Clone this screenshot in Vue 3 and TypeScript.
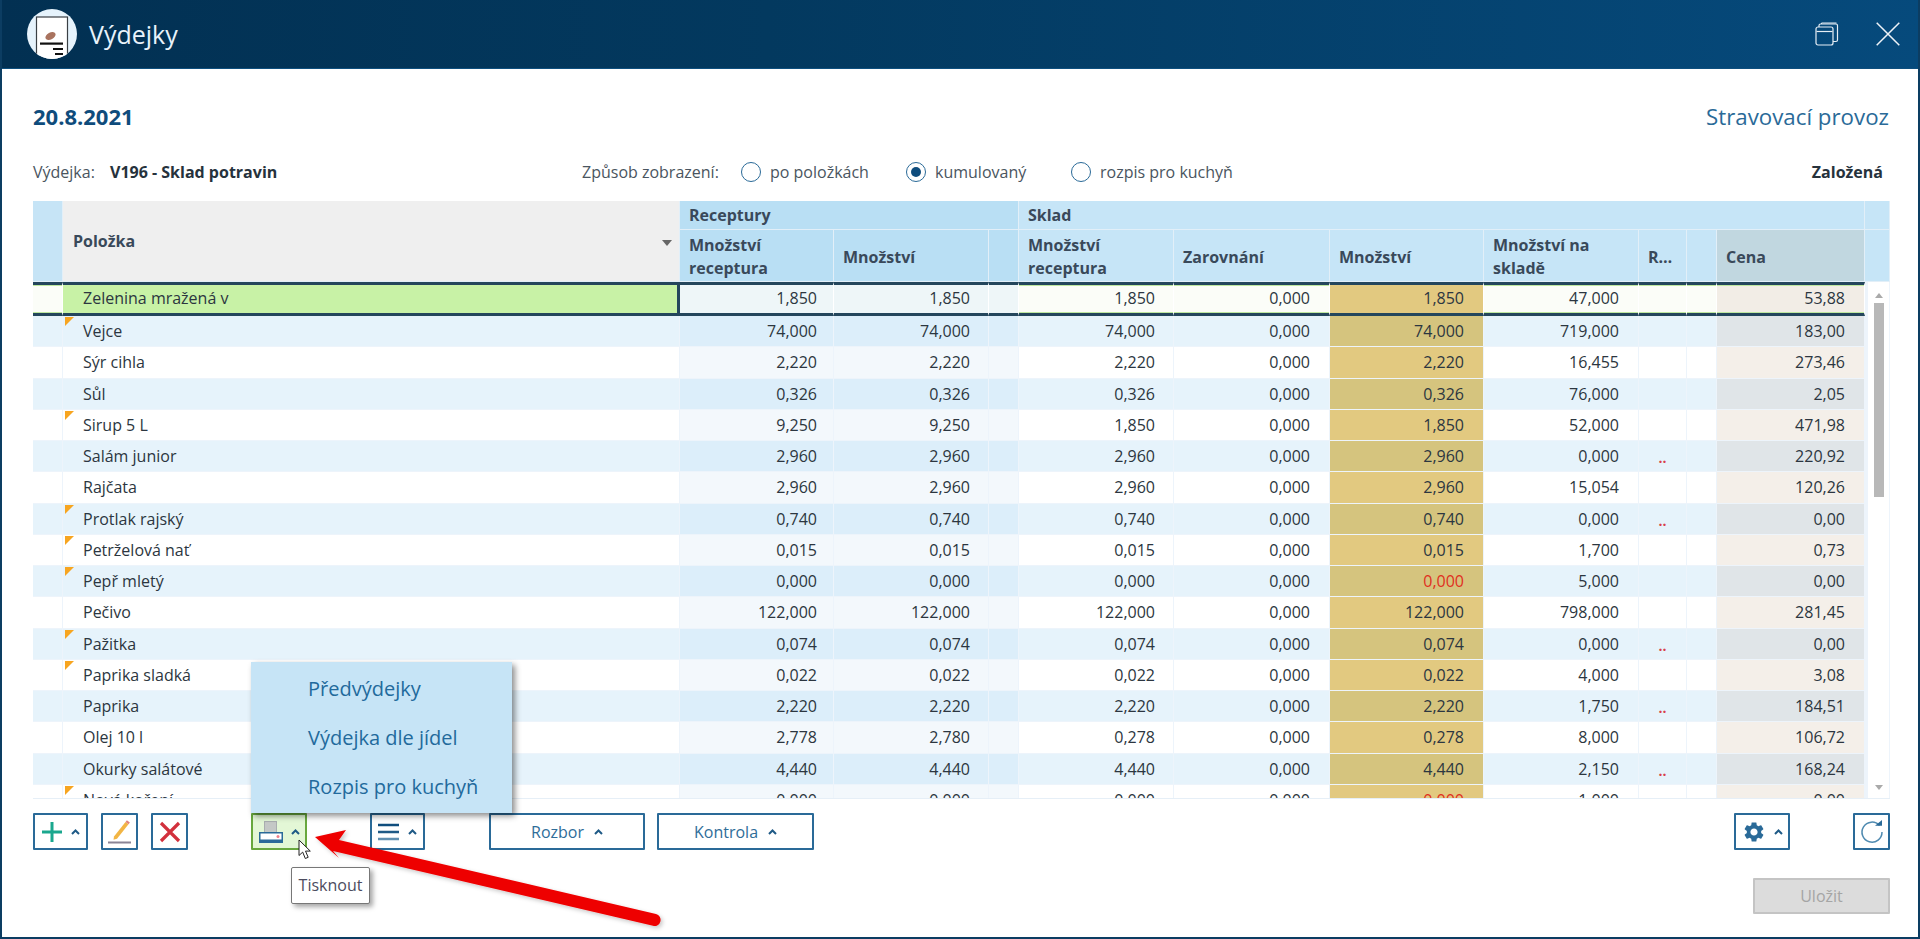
<script setup lang="ts">
interface Row {
  name: string
  flag?: boolean
  a: string
  b: string
  c: string
  z: string
  m: string
  red?: boolean
  s: string
  r?: boolean
  p: string
}
const rows: Row[] = [
  { name: 'Vejce', flag: true, a: '74,000', b: '74,000', c: '74,000', z: '0,000', m: '74,000', s: '719,000', p: '183,00' },
  { name: 'Sýr cihla', a: '2,220', b: '2,220', c: '2,220', z: '0,000', m: '2,220', s: '16,455', p: '273,46' },
  { name: 'Sůl', a: '0,326', b: '0,326', c: '0,326', z: '0,000', m: '0,326', s: '76,000', p: '2,05' },
  { name: 'Sirup 5 L', flag: true, a: '9,250', b: '9,250', c: '1,850', z: '0,000', m: '1,850', s: '52,000', p: '471,98' },
  { name: 'Salám junior', a: '2,960', b: '2,960', c: '2,960', z: '0,000', m: '2,960', s: '0,000', r: true, p: '220,92' },
  { name: 'Rajčata', a: '2,960', b: '2,960', c: '2,960', z: '0,000', m: '2,960', s: '15,054', p: '120,26' },
  { name: 'Protlak rajský', flag: true, a: '0,740', b: '0,740', c: '0,740', z: '0,000', m: '0,740', s: '0,000', r: true, p: '0,00' },
  { name: 'Petrželová nať', flag: true, a: '0,015', b: '0,015', c: '0,015', z: '0,000', m: '0,015', s: '1,700', p: '0,73' },
  { name: 'Pepř mletý', flag: true, a: '0,000', b: '0,000', c: '0,000', z: '0,000', m: '0,000', red: true, s: '5,000', p: '0,00' },
  { name: 'Pečivo', a: '122,000', b: '122,000', c: '122,000', z: '0,000', m: '122,000', s: '798,000', p: '281,45' },
  { name: 'Pažitka', flag: true, a: '0,074', b: '0,074', c: '0,074', z: '0,000', m: '0,074', s: '0,000', r: true, p: '0,00' },
  { name: 'Paprika sladká', flag: true, a: '0,022', b: '0,022', c: '0,022', z: '0,000', m: '0,022', s: '4,000', p: '3,08' },
  { name: 'Paprika', a: '2,220', b: '2,220', c: '2,220', z: '0,000', m: '2,220', s: '1,750', r: true, p: '184,51' },
  { name: 'Olej 10 l', a: '2,778', b: '2,780', c: '0,278', z: '0,000', m: '0,278', s: '8,000', p: '106,72' },
  { name: 'Okurky salátové', a: '4,440', b: '4,440', c: '4,440', z: '0,000', m: '4,440', s: '2,150', r: true, p: '168,24' },
  { name: 'Nová koření', flag: true, a: '0,000', b: '0,000', c: '0,000', z: '0,000', m: '0,000', red: true, s: '1,000', p: '0,00' },
]
const menu: string[] = ['Předvýdejky', 'Výdejka dle jídel', 'Rozpis pro kuchyň']
</script>

<template>
  <div class="window">
    <header class="titlebar">
      <svg class="logo" width="50" height="50" viewBox="0 0 50 50">
        <defs>
          <clipPath id="lc"><circle cx="25" cy="25" r="25" /></clipPath>
        </defs>
        <circle cx="25" cy="25" r="25" fill="#e6f3fc" />
        <g clip-path="url(#lc)">
          <rect x="9.5" y="8" width="31" height="46" fill="#fff" stroke="#3a3f44" stroke-width="1.2" />
          <ellipse cx="23.5" cy="27" rx="5.5" ry="3.4" transform="rotate(-28 23.5 27)" fill="#a9735f" />
          <rect x="13" y="33.5" width="23" height="2.2" fill="#111" />
          <rect x="26" y="39" width="10" height="2" fill="#111" />
          <rect x="28" y="44" width="8" height="2" fill="#111" />
        </g>
      </svg>
      <h1 class="title">Výdejky</h1>
      <svg class="restore" width="24" height="24" viewBox="0 0 24 24" fill="none" stroke="#e6eef5" stroke-width="1.2">
        <rect x="1" y="5" width="17" height="18" rx="2" />
        <path d="M1.5 9.5h16" />
        <path d="M4 5V3.5q0-1.5 1.5-1.5H21q1.500 0 1.500 1.500V18q0 1.500-1.500 1.500h-3" />
        <path d="M6.500 2V1h15" stroke-width="1" />
      </svg>
      <svg class="close" width="24" height="24" viewBox="0 0 24 24" fill="none" stroke="#eef3f8" stroke-width="1.500">
        <path d="M0.700 0.700 23.300 23.300M23.300 0.700 0.700 23.300" />
      </svg>
    </header>

    <main class="content">
      <div class="top-row">
        <div class="date">20.8.2021</div>
        <div class="org">Stravovací provoz</div>
      </div>

      <div class="info-row">
        <div class="doc">
          <span class="doc-label">Výdejka:</span>
          <strong class="doc-value">V196 - Sklad potravin</strong>
        </div>
        <span class="mode-label">Způsob zobrazení:</span>
        <label class="radio"><i class="dot"></i>po položkách</label>
        <label class="radio"><i class="dot on"></i>kumulovaný</label>
        <label class="radio"><i class="dot"></i>rozpis pro kuchyň</label>
        <strong class="state">Založená</strong>
      </div>

      <section class="table">
        <div class="thead">
          <div class="th gutter-h"></div>
          <div class="th item-h">Položka<span class="sort"></span></div>
          <div class="th group rec-g">Receptury</div>
          <div class="th group sk-g">Sklad</div>
          <div class="th end-g"></div>
          <div class="th sub rec-h">Množství receptura</div>
          <div class="th sub rec-h">Množství</div>
          <div class="th sub rec-h"></div>
          <div class="th sub sk-h">Množství receptura</div>
          <div class="th sub sk-h">Zarovnání</div>
          <div class="th sub sk-h">Množství</div>
          <div class="th sub sk-h">Množství na skladě</div>
          <div class="th sub sk-h">R…</div>
          <div class="th sub sk-h"></div>
          <div class="th sub price-h">Cena</div>
          <div class="th end-h"></div>
        </div>

        <div class="tbody">
          <div class="rows">
            <div class="row sel">
              <div class="td gut"></div>
              <div class="td name">Zelenina mražená v</div>
              <div class="td rc">1,850</div>
              <div class="td rc">1,850</div>
              <div class="td rc"></div>
              <div class="td">1,850</div>
              <div class="td">0,000</div>
              <div class="td gold">1,850</div>
              <div class="td">47,000</div>
              <div class="td"></div>
              <div class="td"></div>
              <div class="td price">53,88</div>
            </div>
            <div v-for="(r, i) in rows" :key="r.name" class="row" :class="i % 2 === 0 ? 'blue' : 'white'">
              <div class="td gut"></div>
              <div class="td name" :class="{ flag: r.flag }">{{ r.name }}</div>
              <div class="td rc">{{ r.a }}</div>
              <div class="td rc">{{ r.b }}</div>
              <div class="td rc"></div>
              <div class="td">{{ r.c }}</div>
              <div class="td">{{ r.z }}</div>
              <div class="td gold" :class="{ red: r.red }">{{ r.m }}</div>
              <div class="td">{{ r.s }}</div>
              <div class="td mark">{{ r.r ? '..' : '' }}</div>
              <div class="td"></div>
              <div class="td price">{{ r.p }}</div>
            </div>
          </div>
          <div class="scroll">
            <span class="sc-up"></span>
            <span class="sc-thumb"></span>
            <span class="sc-down"></span>
          </div>
        </div>
      </section>

      <div class="toolbar">
        <button class="btn add">
          <svg width="22" height="22" viewBox="0 0 22 22"><path d="M11 1v20M1 11h20" stroke="#1aa78e" stroke-width="3" fill="none" /></svg>
          <svg class="chev" width="9" height="6" viewBox="0 0 9 6"><path d="M1 5l3.500-3.500L8 5" fill="none" stroke="#1f5a86" stroke-width="2" /></svg>
        </button>
        <button class="btn icon edit">
          <svg width="25" height="25" viewBox="0 0 25 25">
            <path d="M7 17.500 18.500 3l3 2.300L10 19.800l-3.500 1z" fill="#f2b544" />
            <path d="M18.500 3l1.400-1.700 3 2.300-1.400 1.700z" fill="#e2837a" />
            <rect x="1" y="22.500" width="23" height="2" fill="#8a8496" />
          </svg>
        </button>
        <button class="btn icon del">
          <svg width="22" height="22" viewBox="0 0 22 22"><path d="M2 2l18 18M20 2 2 20" stroke="#d2303c" stroke-width="3.200" fill="none" /></svg>
        </button>

        <div class="print-wrap">
          <div class="popup">
            <a v-for="m in menu" :key="m" class="popup-item">{{ m }}</a>
          </div>
          <button class="btn print">
            <svg width="24" height="22" viewBox="0 0 24 22">
              <rect x="5.500" y="0.500" width="12" height="11" fill="#c4c8c6" stroke="#a9aeb0" />
              <rect x="0.750" y="11.750" width="22.500" height="9.500" fill="#fff" stroke="#2a6a98" stroke-width="1.500" />
              <rect x="1" y="18.500" width="22" height="3" fill="#2a6a98" />
              <circle cx="19" cy="15.500" r="1.500" fill="#ef7f8a" />
            </svg>
            <svg class="chev" width="9" height="6" viewBox="0 0 9 6"><path d="M1 5l3.500-3.500L8 5" fill="none" stroke="#1f5a86" stroke-width="2" /></svg>
          </button>
          <svg class="cursor" width="13" height="21" viewBox="0 0 13 21">
            <path d="M1 1v15.500l3.700-3.400 2.600 6.400 2.900-1.200-2.700-6.200h4.800z" fill="#fff" stroke="#222" stroke-width="1" />
          </svg>
          <div class="tooltip">Tisknout</div>
        </div>

        <button class="btn menu">
          <svg width="22" height="18" viewBox="0 0 22 18"><path d="M0 2h21" stroke="#0f4d7d" stroke-width="2.500" /><path d="M0 9h21" stroke="#1f5a86" stroke-width="2.500" /><path d="M0 16h21" stroke="#5f8fb0" stroke-width="2.500" /></svg>
          <svg class="chev" width="9" height="6" viewBox="0 0 9 6"><path d="M1 5l3.500-3.500L8 5" fill="none" stroke="#1f5a86" stroke-width="2" /></svg>
        </button>
        <button class="btn wide rozbor">Rozbor<svg class="chev-t" width="9" height="6" viewBox="0 0 9 6"><path d="M1 5l3.500-3.500L8 5" fill="none" stroke="#1f5a86" stroke-width="2" /></svg></button>
        <button class="btn wide kontrola">Kontrola<svg class="chev-t" width="9" height="6" viewBox="0 0 9 6"><path d="M1 5l3.500-3.500L8 5" fill="none" stroke="#1f5a86" stroke-width="2" /></svg></button>

        <button class="btn gear">
          <svg width="24" height="24" viewBox="0 0 24 24"><path fill="#2a6a98" d="M19.140 12.940c.04-.3.06-.61.06-.94 0-.32-.02-.64-.07-.94l2.030-1.580c.18-.14.230-.41.120-.61l-1.920-3.320c-.12-.22-.37-.29-.59-.22l-2.390.96c-.5-.38-1.030-.7-1.620-.94l-.36-2.540c-.04-.24-.24-.41-.48-.41h-3.840c-.24 0-.43.17-.47.41l-.36 2.540c-.59.24-1.130.57-1.620.94l-2.390-.96c-.22-.08-.47 0-.59.22L2.740 8.870c-.12.21-.08.47.12.61l2.030 1.580c-.05.3-.09.63-.09.94s.02.64.07.94l-2.030 1.580c-.18.14-.23.41-.12.61l1.920 3.320c.12.22.37.29.59.22l2.390-.96c.5.38 1.030.7 1.620.94l.36 2.540c.05.24.24.41.48.41h3.840c.24 0 .44-.17.47-.41l.36-2.540c.59-.24 1.130-.56 1.620-.94l2.390.96c.22.08.47 0 .59-.22l1.920-3.320c.12-.22.07-.47-.12-.61l-2.010-1.580zM12 15.600c-1.980 0-3.600-1.620-3.600-3.600s1.620-3.600 3.600-3.600 3.600 1.620 3.600 3.600-1.620 3.600-3.600 3.600z" /></svg>
          <svg class="chev" width="9" height="6" viewBox="0 0 9 6"><path d="M1 5l3.500-3.500L8 5" fill="none" stroke="#1f5a86" stroke-width="2" /></svg>
        </button>
        <button class="btn icon refresh">
          <svg width="24" height="24" viewBox="0 0 24 24">
            <path d="M19.500 5.500A10 10 0 1 0 22 12" fill="none" stroke="#4f8ab0" stroke-width="1.500" />
            <path d="M15 5.800h7V0z" fill="#2a6a98" />
          </svg>
        </button>
      </div>

      <div class="footer">
        <button class="save" disabled>Uložit</button>
      </div>
    </main>

    <svg class="arrow" width="1920" height="939" viewBox="0 0 1920 939">
      <defs>
        <filter id="as" x="-10%" y="-30%" width="120%" height="160%">
          <feDropShadow dx="2" dy="2" stdDeviation="2" flood-color="#000" flood-opacity=".22" />
        </filter>
      </defs>
      <g filter="url(#as)" fill="#ee0000">
        <path d="M315 837 346 830 339 840 656 914a5.800 5.800 0 0 1-3 11.800L333 851 339 858z" />
      </g>
    </svg>
  </div>
</template>

<style scoped>
.window {
  --cols: 30px 617px 154px 155px 30px 155px 156px 154px 155px 48px 30px 148px;
  position: relative;
  box-sizing: border-box;
  width: 1920px;
  height: 939px;
  display: flex;
  flex-direction: column;
  background: #fff;
  border: 2px solid #0c3d62;
  border-top: 0;
  font-family: "Open Sans", "Noto Sans", sans-serif;
  color: #2c3a46;
  overflow: hidden;
}
.titlebar {
  flex: none;
  height: 68px;
  margin: 0 -2px;
  display: flex;
  align-items: center;
  padding: 0 20px 0 27px;
  background: linear-gradient(90deg, #023052 0%, #03395f 40%, #064a7c 100%);
  border-bottom: 1px solid #0e4f7e;
}
.logo { flex: none; }
.title {
  margin: 0 0 0 12px;
  font-size: 25px;
  font-weight: 400;
  color: #e9f3fb;
  flex: 1;
}
.restore { margin-right: 37px; }
.content {
  flex: 1;
  display: flex;
  flex-direction: column;
  padding: 0 28px 0 31px;
  min-height: 0;
}
.top-row {
  display: flex;
  justify-content: space-between;
  align-items: center;
  height: 32px;
  margin-top: 31px;
}
.date { font-size: 22px; font-weight: 700; color: #0f4c7c; }
.org { font-size: 22.300px; color: #2a6a98; margin-right: 1px; }
.info-row {
  display: flex;
  align-items: center;
  height: 34px;
  margin-top: 23px;
  font-size: 16px;
  color: #4a5560;
}
.doc { width: 549px; flex: none; }
.doc-label { display: inline-block; width: 77px; }
.doc-value { color: #26323c; font-weight: 700; }
.mode-label { width: 159px; flex: none; white-space: nowrap; }
.radio {
  width: 165px;
  flex: none;
  display: flex;
  align-items: center;
  gap: 9px;
  white-space: nowrap;
}
.dot {
  box-sizing: border-box;
  width: 20px;
  height: 20px;
  border: 1.500px solid #2a6a98;
  border-radius: 50%;
  display: flex;
  align-items: center;
  justify-content: center;
  flex: none;
}
.dot.on::after {
  content: "";
  width: 10px;
  height: 10px;
  border-radius: 50%;
  background: #0f4d7d;
}
.state { margin-left: auto; margin-right: 7px; color: #26323c; font-weight: 700; }

.table {
  margin-top: 12px;
  width: 1857px;
  height: 598px;
  display: flex;
  flex-direction: column;
  border-bottom: 1px solid #e6eff7;
  box-sizing: border-box;
}
.thead {
  flex: none;
  display: grid;
  grid-template-columns: var(--cols) 25px;
  grid-template-rows: 29px 52px;
  font-size: 16px;
  font-weight: 700;
  color: #39495a;
}
.th {
  display: flex;
  align-items: center;
  padding: 0 9px;
  line-height: 23px;
  box-sizing: border-box;
  border-right: 1px solid #e2eff8;
  border-bottom: 1px solid #e2eff8;
  min-width: 0;
}
.th.sub { padding-top: 3px; }
.gutter-h { grid-row: span 2; background: #c6e4f6; padding: 0; }
.item-h { grid-row: span 2; background: #efefef; position: relative; padding-left: 10px; }
.sort {
  position: absolute;
  right: 7px;
  top: 39px;
  border: 5px solid transparent;
  border-top: 6px solid #666;
  border-bottom: 0;
}
.rec-g { grid-column: span 3; background: #b9dff4; }
.sk-g { grid-column: span 7; background: #c6e5f7; }
.end-g { background: #c6e5f7; }
.rec-h { background: #b9dff4; }
.sk-h { background: #c6e5f7; }
.price-h { background: #c1d7e0; }
.end-h { background: #c6e5f7; }

.tbody {
  flex: 1;
  display: flex;
  min-height: 0;
}
.rows {
  width: 1832px;
  flex: none;
  overflow: hidden;
}
.row {
  display: grid;
  grid-template-columns: var(--cols);
  height: 31.250px;
  font-size: 16px;
  color: #2c3640;
}
.td {
  position: relative;
  box-sizing: border-box;
  text-align: right;
  padding-right: 19px;
  line-height: 30px;
  border-right: 1px solid #edf4fb;
  border-bottom: 1px solid #edf4fb;
  white-space: nowrap;
}
.td:nth-child(3) { padding-right: 16px; }
.td:nth-child(4), .td:nth-child(6) { padding-right: 18px; }
.td.name { text-align: left; padding: 0 0 0 20px; }
.td.gut { padding: 0; }
.row.white .td { background: #fff; }
.row.blue .td { background: #e6f3fb; }
.row.white .rc { background: #f3f8fc; }
.row.blue .rc { background: #dceefa; }
.row.white .gold { background: #e2c980; }
.row.blue .gold { background: #d5c47e; }
.row.white .price { background: #f4efe9; }
.row.blue .price { background: #e0e5e8; }
.td.red { color: #e0301e; }
.td.mark { color: #d8404a; text-align: center; padding: 3px 0 0; font-weight: 700; line-height: 27px; font-size: 14px; }
.flag::before {
  content: "";
  position: absolute;
  left: 2px;
  top: 1px;
  border-top: 9px solid #f7a520;
  border-right: 9px solid transparent;
}
.row.sel { height: 34px; }
.row.sel .td {
  background: #fbfdf8;
  border-top: 3px solid #24465c;
  border-bottom: 3px solid #24465c;
  border-right: 1px solid #fff;
  line-height: 26px;
  box-shadow: inset 0 1px 0 #bfe8a0, inset 0 -1px 0 #bfe8a0;
}
.row.sel .td.rc { background: #eef6f8; box-shadow: none; }
.row.sel .td.name { background: #c8f2a6; border-right: 3px solid #24465c; padding-left: 20px; box-shadow: none; }
.row.sel .td.gold { background: #e2c980; box-shadow: none; }
.row.sel .td.price { background: #f2ede6; }

.scroll {
  position: relative;
  width: 25px;
  flex: none;
  box-sizing: border-box;
  background: #fff;
  border-left: 3px solid #edf4fb;
  border-right: 1px solid #edf4fb;
  display: flex;
  flex-direction: column;
  align-items: center;
}
.sc-up {
  margin-top: 11px;
  border: 4px solid transparent;
  border-bottom: 5px solid #aaa;
  border-top: 0;
}
.sc-thumb {
  margin-top: 5px;
  width: 10px;
  height: 194px;
  background: #b8b8b8;
}
.sc-down {
  margin-top: auto;
  margin-bottom: 8px;
  border: 4px solid transparent;
  border-top: 5px solid #aaa;
  border-bottom: 0;
}

.toolbar {
  display: flex;
  align-items: center;
  margin-top: 14px;
  height: 37px;
}
.btn {
  box-sizing: border-box;
  height: 37px;
  background: #fff;
  border: 2px solid #2a6a98;
  border-radius: 1px;
  display: flex;
  align-items: center;
  justify-content: center;
  padding: 0;
  font-family: inherit;
  font-size: 16px;
  color: #2f6d99;
  flex: none;
}
.chev { margin-left: 8px; }
.chev-t { margin-left: 10px; }
.icon { width: 37px; }
.add { width: 55px; }
.edit { margin-left: 13px; }
.del { margin-left: 13px; }
.print-wrap {
  position: relative;
  margin-left: 63px;
  flex: none;
}
.print { width: 56px; background: #e3f7d6; border-color: #68a83e; }
.menu { width: 55px; margin-left: 63px; }
.wide { width: 156px; }
.rozbor { margin-left: 64px; }
.kontrola { margin-left: 12px; width: 157px; }
.gear { width: 56px; margin-left: auto; }
.refresh { margin-left: 63px; }
.popup {
  position: absolute;
  left: 0;
  bottom: 37px;
  width: 261px;
  height: 151px;
  box-sizing: border-box;
  padding-top: 2px;
  background: #c6e4f6;
  box-shadow: 3px 3px 6px rgba(0, 0, 0, .45);
  display: flex;
  flex-direction: column;
  z-index: 2;
}
.popup-item {
  display: block;
  height: 49px;
  line-height: 49px;
  padding-left: 57px;
  font-size: 20px;
  color: #226a9c;
  white-space: nowrap;
}
.cursor {
  position: absolute;
  left: 47px;
  top: 26px;
  z-index: 4;
}
.tooltip {
  position: absolute;
  left: 40px;
  top: 54px;
  box-sizing: border-box;
  width: 79px;
  height: 37px;
  line-height: 35px;
  text-align: center;
  background: #fff;
  border: 1px solid #777;
  border-radius: 2px;
  box-shadow: 3px 3px 5px rgba(0, 0, 0, .35);
  font-size: 16px;
  color: #4c4c5e;
  z-index: 3;
}
.footer {
  display: flex;
  justify-content: flex-end;
  margin-top: 28px;
}
.save {
  box-sizing: border-box;
  width: 137px;
  height: 36px;
  background: #dcdcdc;
  border: 2px solid #c4c4c4;
  border-radius: 1px;
  font-family: inherit;
  font-size: 16px;
  color: #a5a5a5;
  padding: 0;
}
.arrow {
  position: absolute;
  left: -2px;
  top: 0;
  pointer-events: none;
  z-index: 5;
}
</style>

<style>
html, body { margin: 0; padding: 0; background: #fff; overflow: hidden; }
</style>
